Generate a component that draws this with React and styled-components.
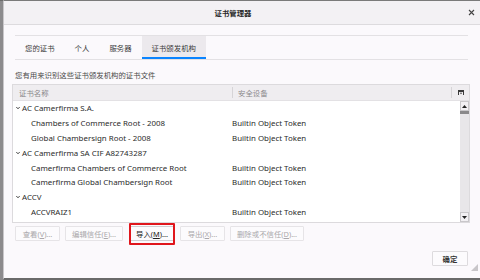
import styled, { createGlobalStyle } from "styled-components";

const GlobalStyle = createGlobalStyle`
  html, body {
    margin: 0;
    padding: 0;
  }
  body {
    background: #8a8a8a;
    font-family: "Noto Sans", "Noto Sans CJK SC", sans-serif;
  }
`;

// Layout
const Screen = styled.div`
  display: flex;
  width: 480px;
  height: 280px;
  overflow: hidden;
`;

const Backdrop = styled.div`
  width: 3px;
  background: #8c8b8d;
  border-top: 1px solid #6c6c6c;
`;

const Dialog = styled.div`
  position: relative;
  flex: 1;
  display: flex;
  flex-direction: column;
  background: #fbf9fc;
  border-top: 1px solid #7a7a7a;
  border-left: 1px solid #c9c7ca;
  border-bottom: 2px solid #6a6a6a;
`;

const TitleBar = styled.div`
  display: flex;
  align-items: center;
  height: 23px;
  background: #f3f1f4;
  border-bottom: 1px solid #dddbde;
`;

const Title = styled.div`
  flex: 1;
  text-align: center;
  font-size: 7.4px;
  font-weight: 700;
  color: #2a2a2a;
`;

const CloseButton = styled.div`
  width: 18px;
  display: flex;
  justify-content: center;
  align-items: center;
`;

const TabStrip = styled.div`
  display: flex;
  height: 23px;
  margin: 10px 12px 0 11px;
  border-top: 1px solid #e3e1e4;
  border-bottom: 1px solid #e3e1e4;
`;

const Tab = styled.div`
  display: flex;
  align-items: center;
  padding: 0 10px;
  font-size: 7.4px;
  color: #3a3a3a;
  background: ${(p) => (p.$active ? "#ece9ed" : "transparent")};
  box-shadow: ${(p) => (p.$active ? "inset 0 -2px 0 #0a84ff" : "none")};
`;

const Description = styled.div`
  padding: 9px 0 0 11px;
  line-height: 12px;
  font-size: 7.4px;
  color: #4a4a4a;
`;

const Tree = styled.div`
  margin: 3px 10px 0 8px;
  border: 1px solid #dcdadd;
  display: flex;
  flex-direction: column;
`;

const TreeHeader = styled.div`
  display: grid;
  grid-template-columns: 219px 1fr 18px;
  align-items: center;
  height: 15px;
  background: #efedf0;
  border-bottom: 1px solid #e3e1e4;
`;

const HeaderCell = styled.div`
  display: flex;
  align-items: center;
  height: 11px;
  padding-left: ${(p) => p.$pad || 6}px;
  font-size: 7.4px;
  color: #8a888b;
  border-left: ${(p) => (p.$divider ? "1px solid #d6d4d7" : "none")};
`;

const PickerCell = styled.div`
  display: flex;
  align-items: center;
  justify-content: center;
  height: 11px;
  border-left: 1px solid #d6d4d7;
`;

const TreeBody = styled.div`
  display: flex;
  height: 121px;
  background: #ffffff;
`;

const Rows = styled.div`
  flex: 1;
`;

const Row = styled.div`
  display: grid;
  grid-template-columns: 219px 1fr;
  height: 14.8px;
  align-items: center;
  font-size: 7.9px;
  color: #2b2b2b;
`;

const NameCell = styled.div`
  display: flex;
  align-items: center;
  gap: 2px;
  padding-left: ${(p) => (p.$group ? 3 : 18)}px;
  white-space: nowrap;
`;

const Scrollbar = styled.div`
  width: 9px;
  display: flex;
  flex-direction: column;
  justify-content: space-between;
  background: #e8e6e9;
`;

const ScrollArrow = styled.div`
  height: 10px;
  display: flex;
  align-items: center;
  justify-content: center;
  background: #f2f0f3;
  border: 1px solid #c9c7ca;
  box-sizing: border-box;
`;

const Thumb = styled.div`
  height: 3px;
  background: #8a898b;
`;

const ButtonRow = styled.div`
  display: flex;
  gap: 5px;
  padding: 3px 0 0 11px;
`;

const Button = styled.div`
  position: relative;
  display: flex;
  align-items: center;
  justify-content: center;
  min-width: 45px;
  height: 15px;
  padding: 0 6px;
  box-sizing: border-box;
  font-size: 7.4px;
  color: ${(p) => (p.$enabled ? "#202020" : "#a9a7aa")};
  background: #fcfbfd;
  border: 1px solid ${(p) => (p.$enabled ? "#d0ced1" : "#e6e4e7")};
  border-radius: 1px;
  margin-left: ${(p) => (p.$marked ? "1px" : "0")};

  &::after {
    content: "";
    display: ${(p) => (p.$marked ? "block" : "none")};
    position: absolute;
    top: -4px;
    bottom: -5px;
    left: -1px;
    right: -1px;
    border: 2px solid #e0161c;
    border-radius: 1px;
  }
`;

const Footer = styled.div`
  display: flex;
  justify-content: flex-end;
  padding: 10px 12px 0 0;
`;

const OkButton = styled(Button)`
  min-width: 0;
  width: 36px;
  padding: 0;
  font-weight: 700;
  color: #333;
  border-color: #dddbde;
`;

const Grip = styled.div`
  position: absolute;
  right: 1px;
  bottom: 1px;
`;

const rows = [
  { group: true, name: "AC Camerfirma S.A." },
  { name: "Chambers of Commerce Root - 2008", token: "Builtin Object Token" },
  { name: "Global Chambersign Root - 2008", token: "Builtin Object Token" },
  { group: true, name: "AC Camerfirma SA CIF A82743287" },
  { name: "Camerfirma Chambers of Commerce Root", token: "Builtin Object Token" },
  { name: "Camerfirma Global Chambersign Root", token: "Builtin Object Token" },
  { group: true, name: "ACCV" },
  { name: "ACCVRAIZ1", token: "Builtin Object Token" },
];

const Chevron = () => (
  <svg width="4" height="4" viewBox="0 0 4 4">
    <path d="M0.3 1 L2 2.8 L3.7 1" fill="none" stroke="#333" strokeWidth="0.9" />
  </svg>
);

export default function App() {
  return (
    <>
      <GlobalStyle />
      <Screen>
        <Backdrop />
        <Dialog>
          <TitleBar>
            <Title>证书管理器</Title>
            <CloseButton>
              <svg width="7" height="7" viewBox="0 0 7 7">
                <path d="M1 1 L6 6 M6 1 L1 6" stroke="#444" strokeWidth="1.1" />
              </svg>
            </CloseButton>
          </TitleBar>

          <TabStrip>
            <Tab>您的证书</Tab>
            <Tab>个人</Tab>
            <Tab>服务器</Tab>
            <Tab $active>证书颁发机构</Tab>
          </TabStrip>

          <Description>您有用来识别这些证书颁发机构的证书文件</Description>

          <Tree>
            <TreeHeader>
              <HeaderCell>证书名称</HeaderCell>
              <HeaderCell $divider $pad={5}>安全设备</HeaderCell>
              <PickerCell>
                <svg width="6" height="5" viewBox="0 0 6 5">
                  <rect x="0" y="0" width="6" height="2" fill="#3a3a3a" />
                  <rect x="0" y="2" width="1" height="3" fill="#3a3a3a" />
                  <rect x="5" y="2" width="1" height="3" fill="#3a3a3a" />
                  <path d="M1.8 2.8 L3 4.2 L4.2 2.8 Z" fill="#3a3a3a" />
                </svg>
              </PickerCell>
            </TreeHeader>
            <TreeBody>
              <Rows>
                {rows.map((r) => (
                  <Row key={r.name}>
                    <NameCell $group={r.group}>
                      {r.group && <Chevron />}
                      {r.name}
                    </NameCell>
                    <div>{r.token}</div>
                  </Row>
                ))}
              </Rows>
              <Scrollbar>
                <div>
                  <ScrollArrow>
                    <svg width="5" height="3" viewBox="0 0 5 3">
                      <path d="M0 3 L2.5 0 L5 3 Z" fill="#222" />
                    </svg>
                  </ScrollArrow>
                  <Thumb />
                </div>
                <ScrollArrow>
                  <svg width="5" height="3" viewBox="0 0 5 3">
                    <path d="M0 0 L2.5 3 L5 0 Z" fill="#222" />
                  </svg>
                </ScrollArrow>
              </Scrollbar>
            </TreeBody>
          </Tree>

          <ButtonRow>
            <Button>查看(<u>V</u>)...</Button>
            <Button>编辑信任(<u>E</u>)...</Button>
            <Button $enabled $marked>导入(<u>M</u>)...</Button>
            <Button>导出(<u>X</u>)...</Button>
            <Button>删除或不信任(<u>D</u>)...</Button>
          </ButtonRow>

          <Footer>
            <OkButton $enabled>确定</OkButton>
          </Footer>

          <Grip>
            <svg width="9" height="9" viewBox="0 0 9 9">
              <path d="M8 1 L8 8 L1 8 Z" fill="#c8c6c9" />
            </svg>
          </Grip>
        </Dialog>
      </Screen>
    </>
  );
}
